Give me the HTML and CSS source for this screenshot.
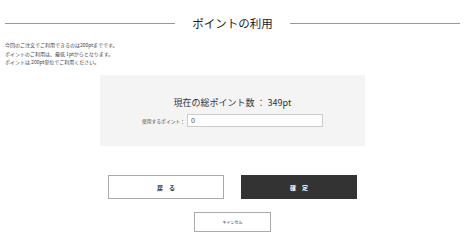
FILE: index.html
```
<!DOCTYPE html>
<html>
<head>
	<meta charset="utf-8">
	<title>ポイントの利用</title>
	<link rel="stylesheet" href="styles.css">
</head>
<body>

<div class="contenedor">
	<h2 class="titulo"><span>ポイントの利用</span></h2>

	<div class="notas">
		<p>今回のご注文でご利用できるのは200ptまでです。</p>
		<p>ポイントのご利用は、最低 1ptからとなります。</p>
		<p>ポイントは 200pt単位でご利用ください。</p>
	</div>

	<div class="caja">
		<div class="total">現在の総ポイント数 ： 349pt</div>
		<div class="fila">
			<label for="puntos">使用するポイント：</label>
			<input type="text" id="puntos" value="0">
		</div>
	</div>

	<div class="botones">
		<a class="boton" href="#">戻る</a>
		<a class="boton oscuro" href="#">確定</a>
	</div>

	<div class="cancelar">
		<a class="boton chico" href="#">キャンセル</a>
	</div>
</div>

</body>
</html>
```

FILE: styles.css
```
html, body {
	margin: 0;
	padding: 0;
	background: #fff;
}

body {
	font-family: "Noto Sans CJK JP", "Liberation Sans", sans-serif;
	color: #333;
}

div.contenedor {
	width: 455px;
	margin-left: 5px;
	padding-top: 15px;
}

h2.titulo {
	display: flex;
	align-items: center;
	gap: 17px;
	margin: 0;
	font-size: 11.5px;
	font-weight: normal;
	line-height: 16px;
	color: #222;
}

h2.titulo::before,
h2.titulo::after {
	content: "";
	flex: 1;
	height: 1px;
	background: #999;
}

div.notas {
	margin-top: 10px;
	font-size: 5px;
	line-height: 8.5px;
	color: #444;
}

div.notas p {
	margin: 0;
}

div.caja {
	width: 265px;
	height: 71px;
	margin: 8.5px auto 0;
	padding-top: 21.5px;
	box-sizing: border-box;
	background: #f4f4f4;
}

div.total {
	text-align: center;
	font-size: 9px;
	line-height: 12px;
	color: #333;
}

div.fila {
	display: flex;
	justify-content: center;
	align-items: center;
	gap: 2px;
	margin-top: 5px;
}

div.fila label {
	font-size: 4.8px;
	color: #444;
}

div.fila input {
	width: 136px;
	height: 13px;
	box-sizing: border-box;
	border: 1px solid #ccc;
	padding: 0 3px;
	font-family: "Liberation Sans", sans-serif;
	font-size: 7px;
	color: #555;
	background: #fff;
}

div.botones {
	display: flex;
	justify-content: center;
	gap: 17px;
	margin-top: 29px;
}

a.boton {
	display: flex;
	justify-content: center;
	align-items: center;
	width: 116px;
	height: 24px;
	box-sizing: border-box;
	border: 1px solid #aaa;
	background: #fff;
	color: #333;
	text-decoration: none;
	font-size: 6px;
	font-weight: bold;
	letter-spacing: 6px;
	text-indent: 6px;
}

a.boton.oscuro {
	background: #333;
	border-color: #333;
	color: #fff;
}

div.cancelar {
	display: flex;
	justify-content: center;
	margin-top: 13px;
}

a.boton.chico {
	width: 77px;
	height: 20px;
	font-size: 4px;
	font-weight: normal;
	letter-spacing: 0;
	text-indent: 0;
}
```
